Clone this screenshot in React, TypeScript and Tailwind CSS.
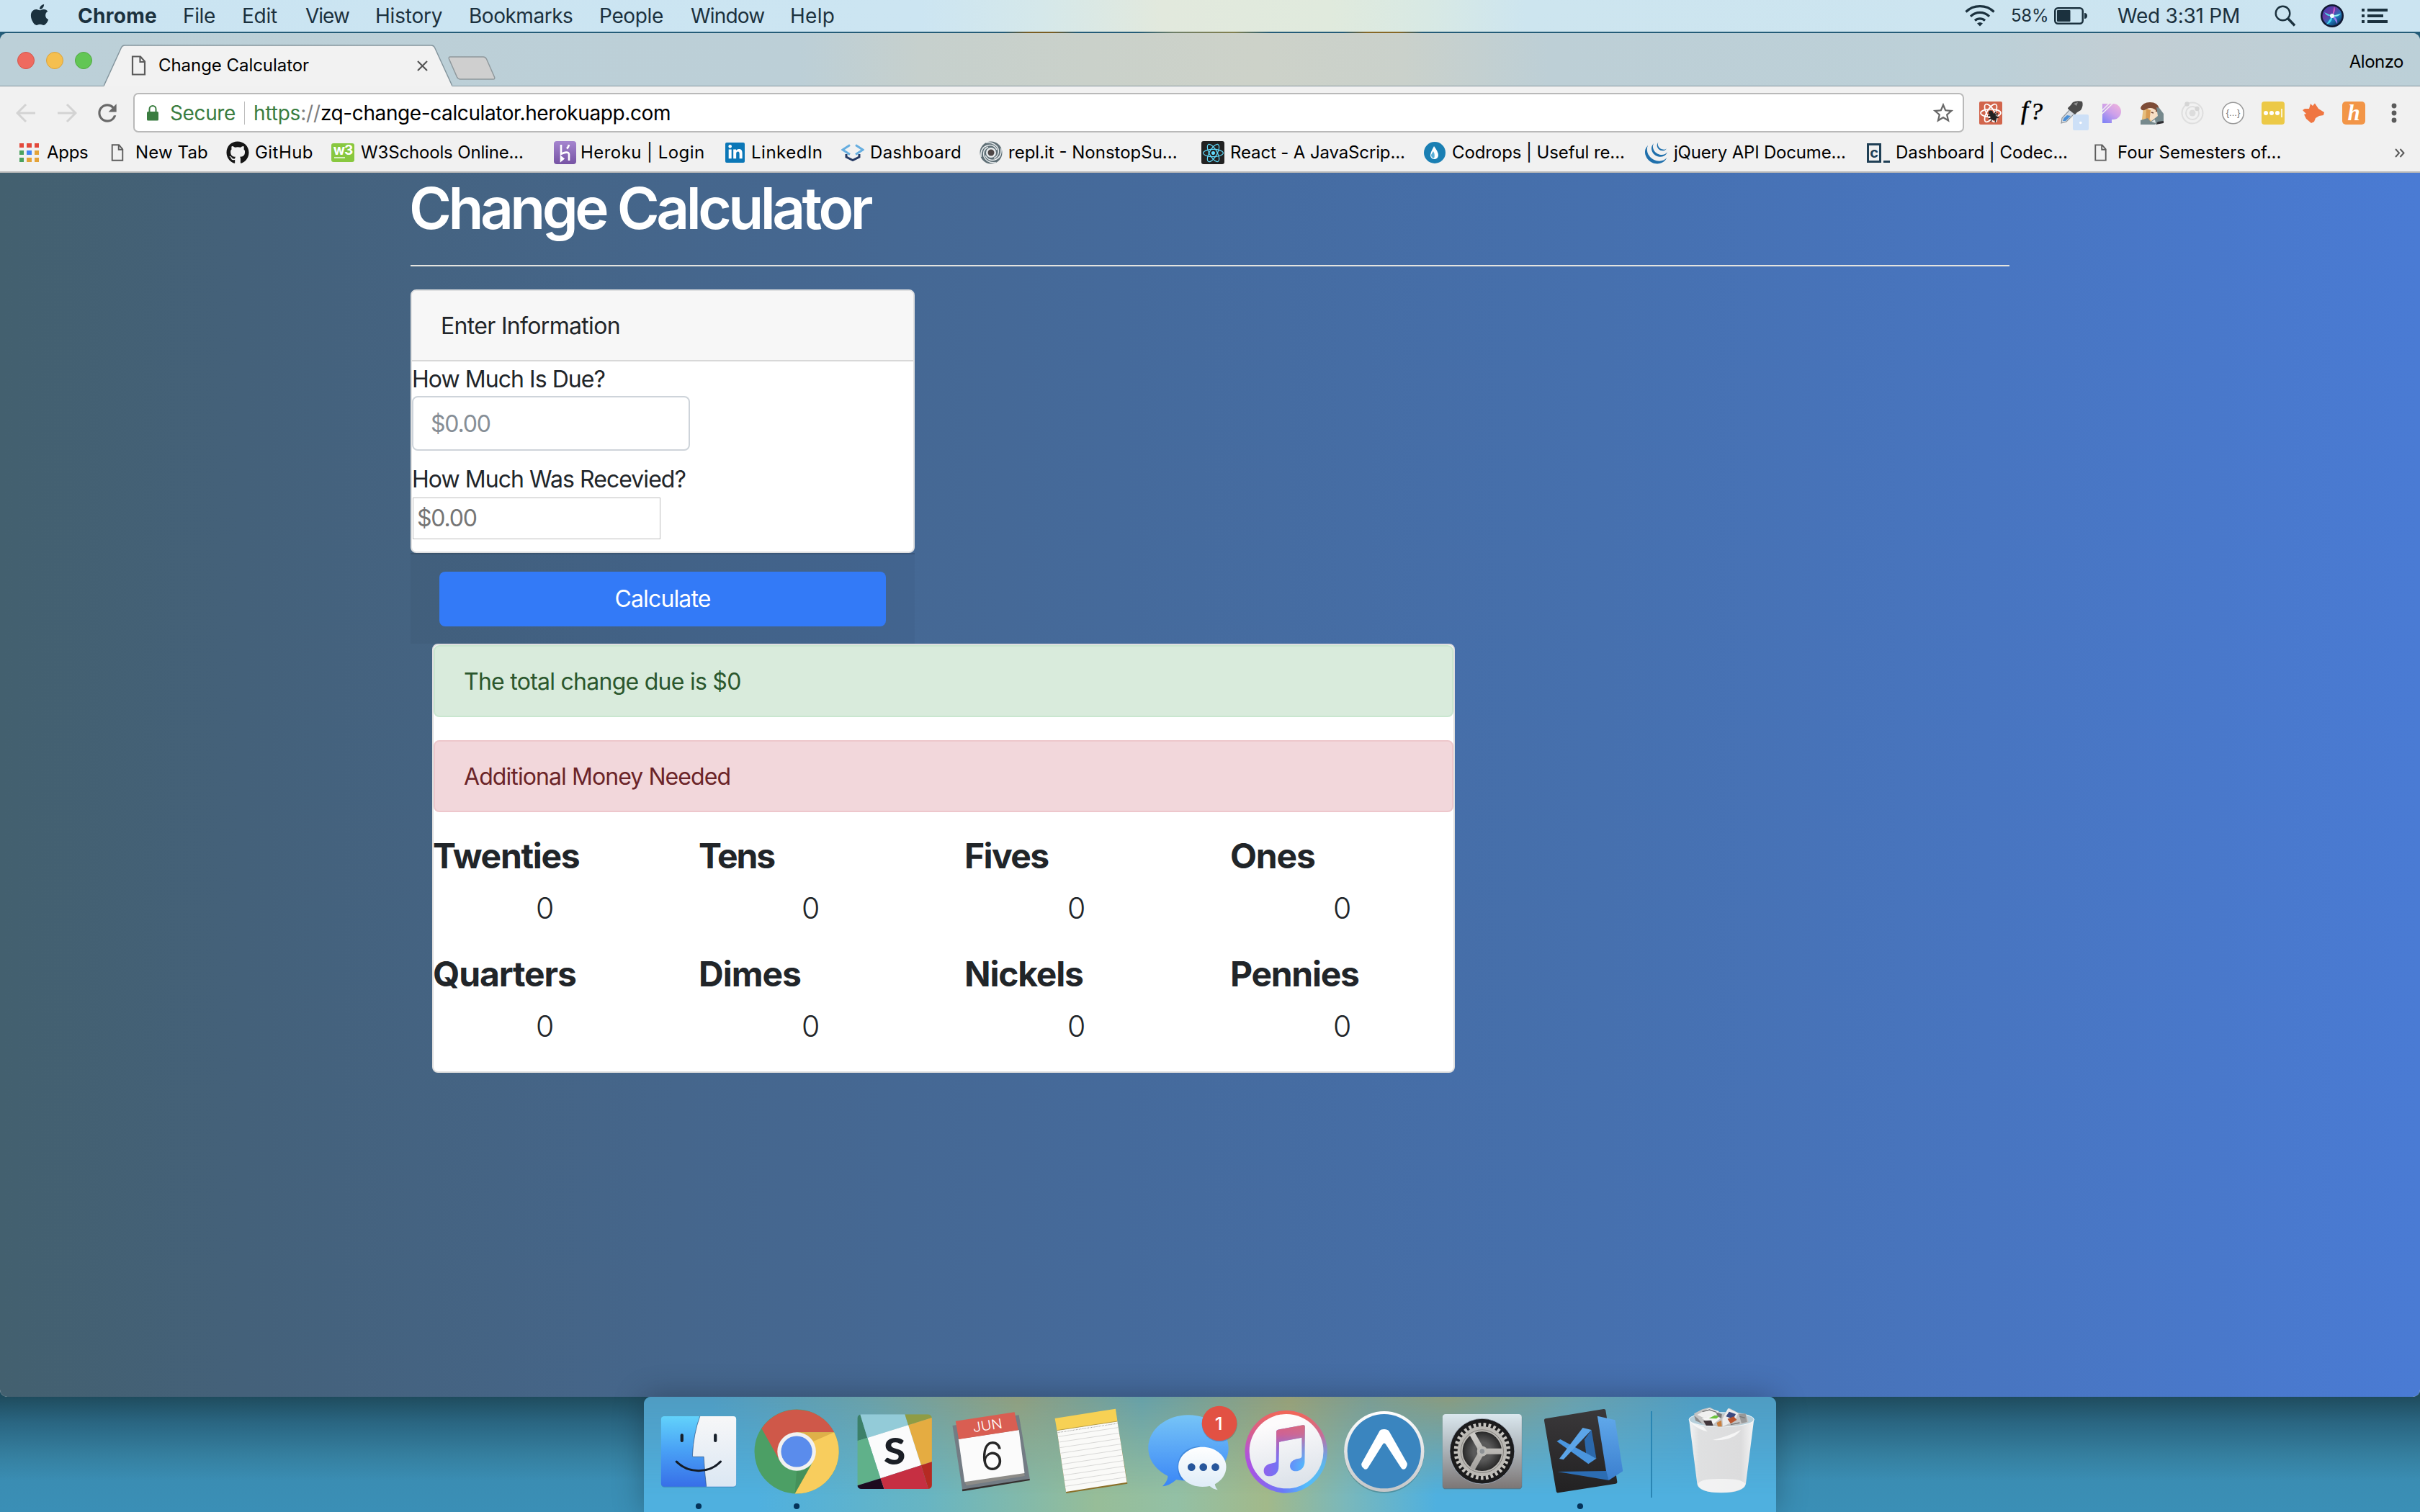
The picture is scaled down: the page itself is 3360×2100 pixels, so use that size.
import React from 'react';
import { FaApple, FaGithub, FaLinkedinIn, FaReact } from 'react-icons/fa';
import { SiJquery } from 'react-icons/si';
import { MdStarBorder, MdRefresh } from 'react-icons/md';

const menus = [
  { label: 'Chrome', cls: 'w-[146px] font-bold tracking-[0.28px]' },
  { label: 'File', cls: 'w-[82px] tracking-[-0.36px]' },
  { label: 'Edit', cls: 'w-[88px] tracking-[-0.25px]' },
  { label: 'View', cls: 'w-[97px] tracking-[-1px]' },
  { label: 'History', cls: 'w-[130px] tracking-[-0.2px]' },
  { label: 'Bookmarks', cls: 'w-[181px] tracking-[-0.48px]' },
  { label: 'People', cls: 'w-[127px] tracking-[-0.35px]' },
  { label: 'Window', cls: 'w-[138px] tracking-[-0.8px]' },
  { label: 'Help', cls: 'w-[80px] tracking-[0.3px]' },
];

function MenuBar() {
  return (
    <header className="flex h-[44px] shrink-0 items-center bg-[linear-gradient(90deg,#cae4f2_0%,#cce5f2_38%,#d5e8ea_43%,#e2e9dd_48%,#e0eadd_55%,#d8e9e4_59%,#cde5ef_63%,#cbe4f1_100%)] text-[28px] text-[#1b313e]">
      <FaApple className="ml-[41px] mt-[-4px] h-[33px] w-[28px]" />
      <nav className="ml-[39px] flex">
        {menus.map((m) => (
          <span key={m.label} className={`shrink-0 whitespace-nowrap ${m.cls}`}>{m.label}</span>
        ))}
      </nav>
      <div className="ml-auto mr-[45px] flex items-center">
        <svg className="h-[30px] w-[42px]" viewBox="0 0 42 30" fill="none" stroke="#1b313e" strokeWidth="3.2">
          <path d="M1.5 9.5C12-1 30-1 40.500 9.500" />
          <path d="M8 15.800C15.500 8.500 26.500 8.500 34 15.800" />
          <path d="M14 21.700C18 18 24 18 28 21.700" />
          <path d="M17 25.500Q21 22.500 25 25.500L21 29.500Z" fill="#1b313e" stroke="none" />
        </svg>
        <span className="ml-[22px] w-[60px] text-[24px] tracking-[-0.22px]">58%</span>
        <svg className="h-[26px] w-[48px]" viewBox="0 0 48 26">
          <rect x="1.250" y="2.250" width="38.500" height="21.500" rx="4" fill="none" stroke="#1b313e" strokeWidth="2.500" />
          <rect x="4" y="5" width="18.500" height="16" rx="1" fill="#1b313e" />
          <path d="M42 9C45 9 46 11 46 13S45 17 42 17Z" fill="#1b313e" />
        </svg>
        <span className="ml-[40px] w-[218px] whitespace-nowrap tracking-[-0.23px]">Wed 3:31 PM</span>
        <svg className="h-[30px] w-[30px]" viewBox="0 0 30 30" fill="none" stroke="#1b313e">
          <circle cx="11.500" cy="11.500" r="9.800" strokeWidth="2.400" />
          <path d="M18.500 18.500L28 28.500" strokeWidth="3.400" />
        </svg>
        <svg className="ml-[33px] h-[34px] w-[34px]" viewBox="0 0 34 34">
          <defs>
            <linearGradient id="siri" x1="0.100" y1="0" x2="0.900" y2="1">
              <stop offset="0" stopColor="#3a3fae" />
              <stop offset="0.350" stopColor="#6a3aa8" />
              <stop offset="0.650" stopColor="#1c78b8" />
              <stop offset="1" stopColor="#10204e" />
            </linearGradient>
          </defs>
          <circle cx="17" cy="17" r="16" fill="#101832" />
          <circle cx="17" cy="17" r="13.500" fill="url(#siri)" />
          <path d="M17 17L6 12C9 17 13 18 17 17Z" fill="#4fd6e8" />
          <path d="M17 17L20 4C22 9 20 14 17 17Z" fill="#d85fc8" />
          <path d="M17 17L29 14C26 18 21 19 17 17Z" fill="#8af0f0" />
          <path d="M17 17L9 29C15 27 18 22 17 17Z" fill="#47d8f0" />
          <path d="M17 17L24 28C25 23 22 18 17 17Z" fill="#9a7af0" />
          <circle cx="17" cy="17" r="3" fill="#f2ffff" />
        </svg>
        <svg className="ml-[24px] h-[22px] w-[36px]" viewBox="0 0 36 22" fill="#1b313e">
          <path d="M0 1h4v4H0zM8 1h28v4H8zM0 9h4v4H0zM8 9h22v4H8zM0 17h4v4H0zM8 17h28v4H8z" />
        </svg>
      </div>
    </header>
  );
}

function PageIcon({ className }: { className: string }) {
  return (
    <svg className={className} viewBox="0 0 20 28" fill="none" stroke="#5c5c5c" strokeWidth="2.200">
      <path d="M1.500 1.500H12.500L18.500 8.500V26.500H1.500Z" />
      <path d="M12 1.500V9H18.500" />
    </svg>
  );
}

function TabStrip() {
  return (
    <div className="flex h-[74px] shrink-0 border-b border-[#84959d] bg-[linear-gradient(90deg,#bcd0d8_0%,#bccfd7_33%,#c6d0cd_38%,#cad1ca_45%,#cdd2c9_52%,#cad1cb_58%,#bdcfd6_64%,#bcd0d8_82%,#c2ced4_88%,#bcd0d8_100%)]">
      <div className="ml-[24px] flex gap-[16px] pt-[26px]">
        <span className="h-[24px] w-[24px] rounded-full border border-[#d3564c] bg-[#ee6a5f]" />
        <span className="h-[24px] w-[24px] rounded-full border border-[#d9a23d] bg-[#f5bf4f]" />
        <span className="h-[24px] w-[24px] rounded-full border border-[#52a842] bg-[#62c655]" />
      </div>
      <div className="relative ml-[16px] mt-[16px] flex h-[58px] w-[484px] items-center">
        <svg className="absolute inset-0 h-[58px] w-[484px]" viewBox="0 0 484 58">
          <path d="M0 57.500L24.500 4Q26 1 29 1H455Q458 1 459.500 4L484 57.500V58H0Z" fill="#f2f2f2" />
          <path d="M0 57.500L24.500 4Q26 1 29 1H455Q458 1 459.500 4L484 57.500" fill="none" stroke="#84959d" strokeWidth="1.500" />
        </svg>
        <PageIcon className="relative ml-[38px] h-[28px] w-[21px]" />
        <span className="relative ml-[17px] whitespace-nowrap text-[24px] tracking-[-0.05px] text-black">Change Calculator</span>
        <svg className="relative ml-auto mr-[34px] h-[15px] w-[15px]" viewBox="0 0 15 15" stroke="#555" strokeWidth="2.200">
          <path d="M1 1L14 14M14 1L1 14" />
        </svg>
      </div>
      <svg className="ml-[-6px] mt-[32px] h-[33px] w-[68px]" viewBox="0 0 68 33">
        <path d="M3 1H49Q52 1 53.500 4L64.500 29Q65.500 32 63 32H17Q14 32 12.500 29L1.500 4Q0.500 1 3 1Z" fill="#cfcfcf" stroke="#8f989c" strokeWidth="1.500" />
      </svg>
      <span className="ml-auto mr-[23px] mt-[25px] text-[24px] leading-[30px] tracking-[-0.5px] text-black">Alonzo</span>
    </div>
  );
}

function Ext({ children }: { children: React.ReactNode }) {
  return (
    <svg className="h-[64px] w-[56px] shrink-0" viewBox="0 0 56 64">
      {children}
    </svg>
  );
}

function Extensions() {
  return (
    <div className="ml-[9px] flex">
      <Ext>
        <rect x="12" y="16" width="32" height="32" rx="2" fill="#d2654c" />
        <g fill="none" stroke="#fff" strokeWidth="1.700">
          <ellipse cx="28" cy="32" rx="14" ry="5.500" />
          <ellipse cx="28" cy="32" rx="14" ry="5.500" transform="rotate(60 28 32)" />
          <ellipse cx="28" cy="32" rx="14" ry="5.500" transform="rotate(-60 28 32)" />
        </g>
        <circle cx="28" cy="31.500" r="3" fill="#222" />
        <ellipse cx="31.500" cy="37" rx="4" ry="5.500" fill="#222" transform="rotate(-30 31.500 37)" />
        <path d="M24 36L38 33M25 40L39 38M28 44L35 30M34 45L37 35" stroke="#222" strokeWidth="1.300" />
      </Ext>
      <Ext>
        <text x="14" y="40" fontFamily="Liberation Serif" fontStyle="italic" fontSize="36" fill="#000" stroke="#000" strokeWidth="0.600">f</text>
        <text x="27" y="41" fontFamily="Liberation Serif" fontStyle="italic" fontSize="34" fill="#000" stroke="#000" strokeWidth="0.600">?</text>
      </Ext>
      <Ext>
        <path d="M14 46L15 39L27 26L33 32L21 44Z" fill="#d5dbe2" stroke="#8e959c" strokeWidth="1.200" />
        <path d="M16 43L17.500 39L22 35L27 36L20 43Z" fill="#4a8fd6" />
        <path d="M23 25L27 21L30 17Q36 14 43 16Q45 22 41 28L36 31L33 34L29 31L23 26Z" fill="#4c4c4c" />
        <path d="M31 19L37 17L35 22Z" fill="#929292" />
        <rect x="30" y="34" width="22" height="22" rx="2" fill="#cde0f7" />
        <circle cx="40.800" cy="45.500" r="1.800" fill="#fff" />
      </Ext>
      <Ext>
        <defs>
          <linearGradient id="pfill" x1="0.900" y1="0" x2="0.200" y2="1">
            <stop offset="0" stopColor="#f0b4dc" />
            <stop offset="0.500" stopColor="#cda0ea" />
            <stop offset="1" stopColor="#8585f5" />
          </linearGradient>
        </defs>
        <path d="M15 19H30A11 11 0 0 1 30 41H28V46H15Z" fill="url(#pfill)" />
        <path d="M14 29L25 18M14 33.500L30 18" stroke="#f1f1f1" strokeWidth="1.500" />
      </Ext>
      <Ext>
        <path d="M16 24L14 40L14 48H28L26 26Z" fill="#e6bd7c" />
        <path d="M22 25L20 38L30 44L36 36L35 25Z" fill="#f8dfc6" />
        <path d="M20 26L19 43L24 46L26 28Z" fill="#d79a52" />
        <path d="M12 25Q15 17 25 17Q36 17 38 26L35 30Q29 23 21 26Q14 31 12 25Z" fill="#7d4c37" />
        <path d="M12 48V42L22 39L26 44L36 36L34 24L38 25L44 33V44L34 46L32 48Z" fill="#76898d" />
        <path d="M27 44L32 41L33 46Z" fill="#dfe5e6" />
        <path d="M33 48L36 44L44 43V46Z" fill="#2f2f33" />
        <path d="M27 31l3 1M33 29l2 .500" stroke="#6b3c2c" strokeWidth="1.500" />
      </Ext>
      <Ext>
        <g fill="none" stroke="#dedede" strokeWidth="2">
          <circle cx="28" cy="32" r="14.500" />
          <circle cx="28" cy="32" r="9" />
        </g>
        <circle cx="28" cy="32" r="4.500" fill="#dcdcdc" />
        <circle cx="20.500" cy="19.500" r="3.200" fill="#d5d5d5" />
        <circle cx="34.500" cy="26" r="3.200" fill="#d5d5d5" />
      </Ext>
      <Ext>
        <circle cx="28.500" cy="32" r="14.800" fill="#fff" stroke="#999" strokeWidth="1.600" />
        <text x="28.500" y="36" textAnchor="middle" fontFamily="Liberation Sans" fontSize="13" fill="#777">{'{...}'}</text>
      </Ext>
      <Ext>
        <rect x="12" y="16" width="32" height="32" rx="4" fill="#ecc947" />
        <circle cx="18" cy="32" r="3" fill="#fff" />
        <circle cx="26" cy="32" r="3" fill="#fff" />
        <circle cx="34" cy="32" r="3" fill="#fff" />
        <path d="M40 26V38" stroke="#fff" strokeWidth="1.500" />
      </Ext>
      <Ext>
        <path d="M24 19L27 22L30 18.500L35 26L43 31L42 35L36 36L31 39L29 44L25 46L18 40L15 34L18 33L13 28L16 26H22Z" fill="#ef7642" />
      </Ext>
      <Ext>
        <rect x="12" y="16" width="32" height="32" rx="5" fill="#f29547" />
        <text x="28" y="42" textAnchor="middle" fontFamily="Liberation Serif" fontStyle="italic" fontWeight="700" fontSize="31" fill="#fff">h</text>
      </Ext>
      <Ext>
        <circle cx="28" cy="22" r="3.400" fill="#5b5b5b" />
        <circle cx="28" cy="32" r="3.400" fill="#5b5b5b" />
        <circle cx="28" cy="42" r="3.400" fill="#5b5b5b" />
      </Ext>
    </div>
  );
}

function Toolbar() {
  return (
    <div className="flex h-[73px] shrink-0 items-center">
      <svg className="ml-[22px] h-[28px] w-[28px]" viewBox="0 0 28 28" fill="none" stroke="#d3d3d3" strokeWidth="3">
        <path d="M27 14H3M14 2L2 14L14 26" />
      </svg>
      <svg className="ml-[29px] h-[28px] w-[28px]" viewBox="0 0 28 28" fill="none" stroke="#d3d3d3" strokeWidth="3">
        <path d="M1 14H25M14 2L26 14L14 26" />
      </svg>
      <MdRefresh className="ml-[23px] h-[38px] w-[38px] text-[#696969]" />
      <div className="ml-[17px] flex h-[55px] w-[2542px] items-center rounded-[7px] border-2 border-[#b9b9b9] bg-white pt-px text-[28px]">
        <svg className="ml-[17px] h-[22px] w-[16px]" viewBox="0 0 16 22">
          <rect x="0" y="9" width="16" height="12.500" rx="1.500" fill="#3a7d40" />
          <path d="M3.500 10V5.500a4.500 4.500 0 0 1 9 0V10" fill="none" stroke="#3a7d40" strokeWidth="2" />
        </svg>
        <span className="ml-[16px] w-[103px] tracking-[-0.38px] text-[#3a7d40]">Secure</span>
        <span className="h-[32px] w-px bg-[#bdbdbd]" />
        <span className="ml-[12px] tracking-[-0.18px] text-[#3a7d40]">https</span>
        <span className="tracking-[-0.18px] text-[#808080]">://</span>
        <span className="tracking-[-0.4px] text-black">zq-change-calculator.herokuapp.com</span>
        <MdStarBorder className="ml-auto mr-[10px] h-[34px] w-[34px] text-[#696969]" />
      </div>
      <Extensions />
    </div>
  );
}

function Bookmark({ cls, text, children, gap }: { cls: string; text: string; gap: string; children: React.ReactNode }) {
  return (
    <div className={`flex shrink-0 items-center whitespace-nowrap ${cls}`}>
      {children}
      <span className={gap}>{text}</span>
    </div>
  );
}

function Bookmarks() {
  return (
    <div className="flex h-[47px] shrink-0 items-start border-b-2 border-[#b9b9b9] pl-[27px] text-[24px] leading-[30px] text-black">
      <div className="flex items-center pt-[3px]">
        <Bookmark cls="w-[127px] tracking-[-0.3px]" text="Apps" gap="ml-[11px]">
          <div className="grid h-[26px] w-[27px] grid-cols-3 gap-[4px]">
            <i className="bg-[#e3493c]" /><i className="bg-[#e3493c]" /><i className="bg-[#e3493c]" />
            <i className="bg-[#4ba25e]" /><i className="bg-[#4285f4]" /><i className="bg-[#e4a338]" />
            <i className="bg-[#4ba25e]" /><i className="bg-[#e4a338]" /><i className="bg-[#e4a338]" />
          </div>
        </Bookmark>
        <Bookmark cls="w-[160px] tracking-[0.13px]" text="New Tab" gap="ml-[16px]">
          <PageIcon className="h-[24px] w-[18px]" />
        </Bookmark>
        <Bookmark cls="w-[146px] tracking-[0.45px]" text="GitHub" gap="ml-[8px]">
          <FaGithub className="h-[32px] w-[32px] text-[#161616]" />
        </Bookmark>
        <Bookmark cls="w-[309px] tracking-[-0.16px]" text="W3Schools Online..." gap="ml-[9px]">
          <span className="relative flex h-[26px] w-[32px] justify-center rounded-[3px] bg-[#88c83f] text-[19px] font-bold leading-[20px] tracking-[-1px] text-white">
            w3
            <i className="absolute bottom-[5px] left-[4px] h-[2px] w-[15px] bg-[#d9efc0]" />
          </span>
        </Bookmark>
        <Bookmark cls="w-[238px] tracking-[0.45px]" text="Heroku | Login" gap="ml-[6px]">
          <svg className="h-[32px] w-[31px]" viewBox="0 0 31 32">
            <defs>
              <linearGradient id="hk" x1="0" y1="0" x2="0" y2="1">
                <stop offset="0" stopColor="#a585cf" />
                <stop offset="1" stopColor="#7653a4" />
              </linearGradient>
            </defs>
            <rect width="31" height="32" rx="4" fill="url(#hk)" />
            <path d="M10 5V18C14 15.500 21 14 21 18.500V27M10 22V27L13 24.500ZM21 5Q20.500 8 18 10.500" fill="none" stroke="#fff" strokeWidth="2.600" />
          </svg>
        </Bookmark>
        <Bookmark cls="w-[161px] tracking-[0.5px]" text="LinkedIn" gap="ml-[9px]">
          <span className="flex h-[28px] w-[27px] items-center justify-center rounded-[2px] bg-[#0b77b7]">
            <FaLinkedinIn className="h-[22px] w-[22px] text-white" />
          </span>
        </Bookmark>
        <Bookmark cls="w-[192px] tracking-[0.36px]" text="Dashboard" gap="ml-[8px]">
          <svg className="h-[24px] w-[32px]" viewBox="0 0 32 24" fill="none" strokeWidth="3">
            <path d="M12 1.500L2 8L12 14.500M20 1.500L30 8L20 14.500" stroke="#66aee0" />
            <path d="M7 14V18L16 22.500L25 18V14" stroke="#263a63" />
          </svg>
        </Bookmark>
        <Bookmark cls="w-[308px]" text="repl.it - NonstopSu..." gap="ml-[8px]">
          <svg className="h-[32px] w-[32px]" viewBox="0 0 32 32">
            <circle cx="16" cy="16" r="15.500" fill="#5f6f76" />
            <g fill="none" stroke="#e8ecee" strokeWidth="1.500">
              <path d="M9 2Q22 1 26 11Q28 20 20 24" />
              <path d="M23 30Q10 31 6 21Q4 12 12 8" />
              <path d="M2 22Q1 9 11 6Q20 4 24 12" />
              <path d="M30 10Q31 23 21 26Q12 28 8 20" />
            </g>
            <circle cx="16" cy="16" r="7" fill="#e8ecee" />
            <circle cx="16" cy="16" r="4.500" fill="#4d4646" />
          </svg>
        </Bookmark>
        <Bookmark cls="w-[309px] tracking-[-0.13px]" text="React - A JavaScrip..." gap="ml-[8px]">
          <span className="flex h-[32px] w-[32px] items-center justify-center rounded-[3px] bg-[#222]">
            <FaReact className="h-[29px] w-[29px] text-[#61dafb]" />
          </span>
        </Bookmark>
        <Bookmark cls="w-[307px] tracking-[-0.1px]" text="Codrops | Useful re..." gap="ml-[9px]">
          <svg className="h-[30px] w-[30px]" viewBox="0 0 30 30">
            <circle cx="15" cy="15" r="15" fill="#1a7fb3" />
            <path d="M14 6Q20 14 20 18.500A5.500 5.500 0 0 1 9 18.500Q9 15 14 6Z" fill="#fff" />
            <path d="M13 13Q16 18 14 23A5 5 0 0 1 10 18Z" fill="#5ab0d8" />
          </svg>
        </Bookmark>
        <Bookmark cls="w-[308px] tracking-[-0.19px]" text="jQuery API Docume..." gap="ml-[9px]">
          <SiJquery className="h-[31px] w-[31px] text-[#2070ac]" />
        </Bookmark>
        <Bookmark cls="w-[316px] tracking-[-0.07px]" text="Dashboard | Codec..." gap="ml-[8px]">
          <span className="flex h-[28px] w-[32px] items-end gap-[3px]">
            <span className="flex h-[27px] w-[20px] items-center justify-center border-[3px] border-[#204056] pb-[2px] text-[20px] font-bold text-[#204056]">c</span>
            <i className="h-[3px] w-[9px] bg-[#204056]" />
          </span>
        </Bookmark>
        <Bookmark cls="w-[417px]" text="Four Semesters of..." gap="ml-[15px]">
          <PageIcon className="h-[24px] w-[17px]" />
        </Bookmark>
        <svg className="h-[13px] w-[14px]" viewBox="0 0 14 13" fill="none" stroke="#5a5a5a" strokeWidth="2">
          <path d="M1 1L6 6.500L1 12M7.500 1L12.500 6.500L7.500 12" />
        </svg>
      </div>
    </div>
  );
}

const coins = [
  [
    { name: 'Twenties', cls: 'tracking-[-1.3px]' },
    { name: 'Tens', cls: 'tracking-[-2.2px]' },
    { name: 'Fives', cls: 'tracking-[-1.6px]' },
    { name: 'Ones', cls: 'tracking-[-1.15px]' },
  ],
  [
    { name: 'Quarters', cls: 'tracking-[-1.11px]' },
    { name: 'Dimes', cls: 'tracking-[-1.02px]' },
    { name: 'Nickels', cls: 'tracking-[-1.2px]' },
    { name: 'Pennies', cls: 'tracking-[-1.28px]' },
  ],
];

function Page() {
  return (
    <main className="flex-1 bg-[linear-gradient(90deg,#43606f_0%,#44617a_10%,#45668c_28%,#456a9b_46%,#4670ae_66%,#4875c0_82%,#4a7bd4_100%)] pl-[570px] text-[32px] font-[440] text-[#212529]">
      <h1 className="ml-[-2px] pt-px text-[80px] font-[590] leading-[96px] tracking-[-4.5px] text-white">Change Calculator</h1>
      <hr className="mt-[31px] w-[2220px] border-t-2 border-[#e4e4e0]" />
      <section className="mt-[32px] w-[700px]">
        <div className="h-[366px] rounded-[8px] border-2 border-[#dfe0e1] bg-white">
          <div className="flex h-[98px] items-center rounded-t-[6px] border-b-2 border-[#d8d8d8] bg-[#f7f7f7] pl-[40px] pt-[2px] tracking-[-0.68px]">Enter Information</div>
          <label className="block h-[48px] pl-px leading-[50px] tracking-[-0.95px] -indent-[1px]">How Much Is Due?</label>
          <div className="flex h-[76px] w-[386px] items-center rounded-[8px] border-2 border-[#ced4da] pl-[24px] pt-px tracking-[-1.2px] text-[#868e96]">$0.00</div>
          <label className="mt-[16px] block h-[49px] pl-px leading-[48px] tracking-[-0.95px] -indent-[1px]">How Much Was Recevied?</label>
          <div className="ml-[1px] flex h-[58px] w-[344px] items-center border border-[#bdbdbd] pl-[5px] tracking-[-1.2px] text-[#757575]">$0.00</div>
        </div>
        <div className="h-[126px] border-t-2 border-black/[0.12] bg-black/[0.03] px-[40px] pt-[24px]">
          <div className="flex h-[76px] items-center justify-center rounded-[8px] bg-[#337af7] tracking-[-0.85px] text-white">Calculate</div>
        </div>
      </section>
      <section className="ml-[30px] h-[596px] w-[1420px] rounded-[8px] border-2 border-[#dfdfdf] bg-white">
        <div className="flex h-[100px] items-center rounded-[8px] border-2 border-[#c9e6cf] bg-[#d9ebdc] pl-[40px] pt-px tracking-[-0.74px] text-[#2b572d]">The total change due is $0</div>
        <div className="mt-[32px] flex h-[100px] items-center rounded-[8px] border-2 border-[#eec7cc] bg-[#f2d7db] pl-[40px] pt-px tracking-[-0.92px] text-[#6b2428]">Additional Money Needed</div>
        <div className="flex flex-col gap-[16px] pt-[32px]">
          {coins.map((row, i) => (
            <div key={i} className="flex h-[148px]">
              {row.map((c) => (
                <div key={c.name} className="w-[369px] shrink-0 last:w-auto">
                  <h2 className={`-ml-px text-[48px] font-bold leading-[58px] ${c.cls}`}>{c.name}</h2>
                  <p className="mt-[13px] pl-[142px] text-[41px] font-light leading-[60px]">0</p>
                </div>
              ))}
            </div>
          ))}
        </div>
      </section>
    </main>
  );
}

/* Dock artwork uses a 2.8 x 3 drawing grid per pixel. */
function DockIcon({ box, cls, children }: { box: string; cls: string; children: React.ReactNode }) {
  return (
    <svg className={`h-[160px] shrink-0 ${cls}`} viewBox={box} preserveAspectRatio="none">
      {children}
    </svg>
  );
}

function Dot({ x }: { x: number }) {
  return <ellipse cx={x} cy="516" rx="11.500" ry="12" fill="#04335a" />;
}

const noteLines = [226, 249, 272, 295, 318, 341, 364, 387, 410, 433];

function Dock() {
  return (
    <div className="relative ml-[894px] flex h-[160px] w-[1572px] overflow-hidden rounded-t-[10px] bg-[#4fb0df] shadow-[0_0_44px_rgba(0,0,0,0.28)]">
      <div className="absolute inset-0 bg-[linear-gradient(90deg,transparent_10%,rgba(150,190,140,0.35)_25%,#97bd98_40%,#93c0a5_47%,#a2b98a_55%,#7ab8bb_62%,rgba(79,176,223,0)_70%)]" />
      <div className="absolute inset-0 bg-[linear-gradient(90deg,#4f9cc2_6%,#6aa0a8_20%,#8f9e7f_33%,#66a0a8_44%,#969f78_57%,#7b9c92_64%,#8a9b7e_71%,#6ba0ab_82%,#4f9cc2_93%)] [mask-image:linear-gradient(#000_0%,transparent_85%)]" />
      <div className="relative flex">
        <DockIcon box="70 60 364 480" cls="ml-[11px] w-[130px]">
          <defs>
            <linearGradient id="fb" x1="0" y1="0" x2="0" y2="1">
              <stop offset="0" stopColor="#62d2fb" />
              <stop offset="0.500" stopColor="#489ff5" />
              <stop offset="1" stopColor="#376fe8" />
            </linearGradient>
            <linearGradient id="fw" x1="0" y1="0" x2="0" y2="1">
              <stop offset="0" stopColor="#f7f7f8" />
              <stop offset="1" stopColor="#dbe7f3" />
            </linearGradient>
          </defs>
          <rect x="107" y="143" width="291" height="294" rx="12" fill="#1d5f88" opacity="0.400" />
          <rect x="106" y="141" width="292" height="293" rx="12" fill="url(#fb)" />
          <path d="M257 141H386Q398 141 398 153V422Q398 434 386 434H282Q275 375 272 310H232Q227 310 228 303Q232 215 257 141Z" fill="url(#fw)" />
          <path d="M257 141Q232 215 228 303Q227 310 232 310H272Q275 375 282 434" fill="none" stroke="#17406f" strokeWidth="2.500" opacity="0.700" />
          <path d="M187 220V243M317 220V243" stroke="#17202a" strokeWidth="12" strokeLinecap="round" />
          <path d="M166 330Q200 368 252 368Q305 368 337 330" fill="none" stroke="#141b26" strokeWidth="9" strokeLinecap="round" />
          <Dot x={252} />
        </DockIcon>
        <DockIcon box="434 60 392 480" cls="w-[140px]">
          <g transform="translate(633 288) scale(1 1.070)">
            <circle r="164" fill="#4c9f65" />
            <path d="M-136 -90A164 164 0 0 1 146 -75H0L-65 37Z" fill="#cf5849" />
            <path d="M146 -75A164 164 0 0 1 -7 164L60 45L0 -75Z" fill="#f8cd5d" />
            <path d="M-7 164L57 52Q20 85 0 75Z" fill="#3d8450" opacity="0.500" />
            <path d="M146 -75H0L66 -40Z" fill="#cf9c3c" opacity="0.600" />
            <circle r="75" fill="#f1f1f1" />
            <circle r="60.500" fill="#5a8cec" />
          </g>
          <Dot x={633} />
        </DockIcon>
        <DockIcon box="826 60 364 480" cls="w-[130px]">
          <clipPath id="sl"><rect x="869" y="133" width="290" height="311" rx="16" /></clipPath>
          <g clipPath="url(#sl)">
            <path d="M869 133H880L908 231L869 244Z" fill="#3c8068" />
            <path d="M880 133H1054L1067 178L908 231Z" fill="#93cbd8" />
            <path d="M1054 133H1159V147L1067 178Z" fill="#8f9c44" />
            <path d="M1067 178L1159 147V331L1117 345Z" fill="#e5ac41" />
            <path d="M908 231L1067 178L1117 345L959 400Z" fill="#fbfbfc" />
            <path d="M869 244L908 231L959 400L869 430Z" fill="#60b18a" />
            <path d="M869 430L959 400L973 444H869Z" fill="#1d0a1f" />
            <path d="M959 400L1117 345L1145 444H973Z" fill="#c62f42" />
            <path d="M1117 345L1159 331V444H1145Z" fill="#b52a22" />
          </g>
          <text x="1014" y="343" textAnchor="middle" fontFamily="Lato" fontWeight="900" fontSize="154" fill="#1a1e25">S</text>
        </DockIcon>
        <DockIcon box="1190 60 378 480" cls="w-[135px]">
          <path d="M1239 180L1497 136L1540 406L1278 453Z" fill="#737c84" />
          <path d="M1276 446L1538 402L1540 408L1278 454Z" fill="#34302e" />
          <path d="M1286 415L1517 375L1520 390L1293 430Z" fill="#8d8c88" />
          <path d="M1262 236L1497 198L1519 378L1286 415Z" fill="#fbfbfb" />
          <path d="M1251 161L1480 124L1495 199L1263 237Z" fill="#d95e52" />
          <text x="1375" y="199" textAnchor="middle" transform="rotate(-9 1375 180)" fontFamily="Inter" fontSize="56" fontWeight="300" fill="#fff">JUN</text>
          <text transform="translate(1393 367) scale(0.900 1)" textAnchor="middle" fontFamily="Inter" fontSize="166" fontWeight="300" fill="#262626">6</text>
        </DockIcon>
        <DockIcon box="56 60 392 480" cls="w-[140px]">
          <path d="M133 202L368 164L407 422L169 462Z" fill="#8a6f28" />
          <path d="M133 200L368 162L405 416L168 456Z" fill="#fafaf8" />
          <path d="M125 150L361 110L368 162L133 200Z" fill="#f7d154" />
          <path d="M133 200L368 162" stroke="#a9892f" strokeWidth="2" />
          <path d="M136 209L368 171" stroke="#999" strokeWidth="3" strokeDasharray="3 3" />
          {noteLines.map((y, i) => (
            <path key={y} d={`M${138 + i * 3} ${y}L${371 + i * 3.4} ${y - 38}`} stroke="#c9c9c7" strokeWidth="2" />
          ))}
        </DockIcon>
        <DockIcon box="448 60 406 480" cls="w-[145px]">
          <defs>
            <linearGradient id="mb" x1="0" y1="0" x2="0" y2="1">
              <stop offset="0" stopColor="#76c4f7" />
              <stop offset="1" stopColor="#3a86f6" />
            </linearGradient>
            <linearGradient id="mw" x1="0" y1="0" x2="0" y2="1">
              <stop offset="0" stopColor="#ffffff" />
              <stop offset="1" stopColor="#dcebf7" />
            </linearGradient>
          </defs>
          <path d="M644 136C730 136 800 197 800 273C800 349 730 410 644 410C628 410 612 408 597 405C580 422 560 432 543 433C555 420 564 405 564 390C517 365 488 322 488 273C488 197 558 136 644 136Z" fill="url(#mb)" />
          <path d="M602 352C602 300 640 266 690 266L620 408C606 392 602 372 602 352Z" fill="#1d5fae" opacity="0.350" />
          <path d="M698 269C750 269 791 306 791 352C791 383 774 409 747 424C748 434 752 442 758 448C746 446 735 440 727 432C718 434 708 435 698 435C646 435 605 398 605 352C605 306 646 269 698 269Z" fill="url(#mw)" />
          <ellipse cx="656" cy="353" rx="15" ry="16" fill="#27569b" />
          <ellipse cx="702" cy="353" rx="15" ry="16" fill="#27569b" />
          <ellipse cx="749" cy="353" rx="15" ry="16" fill="#27569b" />
          <ellipse cx="765" cy="174" rx="69" ry="73" fill="#334" opacity="0.250" />
          <ellipse cx="764.500" cy="170.500" rx="68" ry="72.500" fill="#e25143" />
          <text x="762" y="198" textAnchor="middle" fontFamily="Inter" fontSize="74" fontWeight="500" fill="#fff">1</text>
        </DockIcon>
        <DockIcon box="854 60 364 480" cls="w-[130px]">
          <defs>
            <linearGradient id="ith" gradientUnits="userSpaceOnUse" x1="870" y1="0" x2="1180" y2="0">
              <stop offset="0" stopColor="#b04fe0" />
              <stop offset="0.450" stopColor="#6a78f8" />
              <stop offset="0.750" stopColor="#52bdfb" />
              <stop offset="1" stopColor="#5fb6e8" />
            </linearGradient>
            <linearGradient id="itv" gradientUnits="userSpaceOnUse" x1="0" y1="118" x2="0" y2="340">
              <stop offset="0.050" stopColor="#f0665a" />
              <stop offset="0.450" stopColor="#dd5f86" stopOpacity="0.850" />
              <stop offset="1" stopColor="#b060d0" stopOpacity="0" />
            </linearGradient>
            <linearGradient id="itw" x1="0" y1="0" x2="0.200" y2="1">
              <stop offset="0.200" stopColor="#fdfbfc" />
              <stop offset="1" stopColor="#dde3ea" />
            </linearGradient>
            <path id="note" d="M986 205Q986 199 992 197L1089 178Q1097 176 1097 184L1096 330C1096 355 1080 370 1061 370C1046 370 1039 360 1039 348C1039 330 1055 319 1075 317Q1085 316 1085 307V230L997 248L995 350C995 375 980 391 958 391C944 391 937 381 937 368C937 352 950 340 970 337Q985 335 985 328Z" />
          </defs>
          <ellipse cx="1024" cy="289" rx="160" ry="172" fill="url(#ith)" />
          <ellipse cx="1024" cy="289" rx="160" ry="172" fill="url(#itv)" />
          <ellipse cx="1025" cy="287" rx="144" ry="155" fill="url(#itw)" />
          <use href="#note" fill="url(#ith)" />
          <use href="#note" fill="url(#itv)" />
        </DockIcon>
        <DockIcon box="1218 60 350 480" cls="w-[125px]">
          <defs>
            <linearGradient id="as" x1="0" y1="0" x2="0" y2="1">
              <stop offset="0" stopColor="#ffffff" />
              <stop offset="1" stopColor="#c4c6c8" />
            </linearGradient>
          </defs>
          <ellipse cx="1405" cy="292" rx="156" ry="169" fill="#244" opacity="0.300" />
          <ellipse cx="1405" cy="288" rx="156" ry="168" fill="url(#as)" />
          <ellipse cx="1405" cy="287" rx="143" ry="155" fill="#3a85bf" />
          <path d="M1388 201Q1392 195 1405 195Q1418 195 1424 203L1494 336Q1497 345 1489 358Q1480 367 1472 358L1411 257Q1405 250 1400 257L1341 358Q1332 367 1325 358Q1313 348 1318 336Z" fill="#fff" />
        </DockIcon>
        <DockIcon box="56 60 420 480" cls="w-[150px]">
          <defs>
            <linearGradient id="spb" x1="0" y1="0" x2="0" y2="1">
              <stop offset="0" stopColor="#dae7ee" />
              <stop offset="0.500" stopColor="#aab1b6" />
              <stop offset="1" stopColor="#7c7675" />
            </linearGradient>
            <linearGradient id="spg" gradientUnits="userSpaceOnUse" x1="0" y1="-80" x2="0" y2="80">
              <stop offset="0" stopColor="#d2d0cc" />
              <stop offset="1" stopColor="#a09e9a" />
            </linearGradient>
            <radialGradient id="spd">
              <stop offset="0.400" stopColor="#5a5a5a" />
              <stop offset="1" stopColor="#1b1b1b" />
            </radialGradient>
          </defs>
          <rect x="120" y="134" width="309" height="311" rx="12" fill="#444" opacity="0.500" />
          <rect x="120" y="132" width="308" height="310" rx="12" fill="url(#spb)" />
          <g transform="translate(274 287) scale(1 1.080)">
            <circle r="126" fill="#1b1b1c" stroke="#bcc9da" strokeWidth="2" />
            <circle r="88" fill="url(#spd)" />
            <circle r="102" fill="none" stroke="#c6c4bf" strokeWidth="16" pathLength="66" strokeDasharray="1.050 0.950" />
            <circle r="86" fill="none" stroke="#bab8b3" strokeWidth="20" />
            <circle r="83" fill="none" stroke="#6d6b68" strokeWidth="2" />
            <g stroke="url(#spg)" strokeWidth="22">
              <path d="M0 0L78 0.100" />
              <path d="M0 0L-39 -68" />
              <path d="M0 0L-39 68" />
            </g>
            <circle r="20" fill="#bab8b3" />
            <circle r="11" fill="#8e9295" stroke="#d9d9d9" strokeWidth="1.500" />
          </g>
        </DockIcon>
        <DockIcon box="476 60 406 480" cls="w-[145px]">
          <defs>
            <linearGradient id="vsk" x1="0" y1="0" x2="0" y2="1">
              <stop offset="0" stopColor="#3a383a" />
              <stop offset="1" stopColor="#222122" />
            </linearGradient>
            <linearGradient id="vsb" x1="0" y1="0" x2="0" y2="1">
              <stop offset="0" stopColor="#60a8ea" />
              <stop offset="1" stopColor="#3b7fcf" />
            </linearGradient>
          </defs>
          <path d="M520 151L746 111Q753 110 754 116L799 414Q800 421 793 422L570 460Q563 461 562 454L515 158Q515 152 520 151Z" fill="url(#vsk)" />
          <path d="M567 372L757 369L767 408Z" fill="#2c6db3" />
          <path d="M722 140L791 157L821 370L766 408L756 369Z" fill="url(#vsb)" />
          <path d="M672 238L699 198L718 317L678 297Z" fill="#2b68ab" />
          <path d="M564 245L578 237L718 317L687 340Z" fill="#4a95de" />
          <path d="M665 189L699 198L590 322L574 318Z" fill="#5ca5e8" />
          <Dot x={655} />
        </DockIcon>
        <span className="ml-[17px] mt-[20px] h-[120px] w-[2px] bg-[#2a86b4]" />
        <DockIcon box="1036 60 336 480" cls="ml-[36px] w-[120px]">
          <defs>
            <linearGradient id="tr" x1="0" y1="0" x2="1" y2="0">
              <stop offset="0" stopColor="#f3f4f5" />
              <stop offset="0.150" stopColor="#dfe0e1" />
              <stop offset="0.800" stopColor="#dcdcdd" />
              <stop offset="1" stopColor="#f5f5f5" />
            </linearGradient>
          </defs>
          <path d="M1078 152L1110 424Q1116 459 1204 460Q1292 459 1299 424L1331 152Q1310 184 1204 184T1078 152Z" fill="url(#tr)" />
          <path d="M1112 424Q1120 400 1204 402Q1288 400 1297 424Q1290 458 1204 459T1112 424Z" fill="#fff" opacity="0.600" />
          <ellipse cx="1204.500" cy="155" rx="126" ry="30" fill="#b6cfdb" stroke="#f2f6f8" strokeWidth="3" />
          <path d="M1098 130L1130 112L1160 104L1190 122L1212 135L1235 107L1268 126L1300 132L1310 165L1270 178L1200 186L1140 178L1105 160Z" fill="#c4c4c4" />
          <path d="M1110 135L1155 108L1195 120L1180 140L1135 148Z" fill="#f0f0f0" />
          <path d="M1098 138L1112 150L1130 172L1104 160Z" fill="#8b8b8b" />
          <path d="M1128 150L1180 136L1200 150L1170 176Z" fill="#f4f4f4" />
          <path d="M1134 160L1165 158L1172 180L1145 180Z" fill="#41353a" />
          <path d="M1155 150L1178 137L1196 140L1185 151Z" fill="#6cc23e" />
          <path d="M1182 124L1206 132L1204 150L1190 140Z" fill="#777" />
          <path d="M1208 152L1230 108L1270 128L1256 160L1210 184Z" fill="#ececec" />
          <path d="M1222 142L1234 122L1260 132L1250 152Z" fill="#3a4a80" />
          <path d="M1228 152L1252 142L1264 156L1240 172Z" fill="#b9552f" />
          <path d="M1186 168L1204 158L1206 184L1190 184Z" fill="#c87f3e" />
          <path d="M1272 132L1298 130L1304 165L1282 170Z" fill="#999" />
          <path d="M1130 122L1158 114L1185 124M1275 142L1296 148M1240 176L1275 168" fill="none" stroke="#777" strokeWidth="4" />
          <path d="M1085 168Q1120 200 1150 205L1135 186Z" fill="#fff" opacity="0.700" />
          <path d="M1170 240Q1250 245 1280 198Q1230 225 1170 240Z" fill="#fff" opacity="0.700" />
        </DockIcon>
      </div>
    </div>
  );
}

export default function App() {
  return (
    <div className="flex h-[2100px] w-[3360px] flex-col overflow-hidden bg-[#245c78] font-['Inter',sans-serif]">
      <MenuBar />
      <div className="h-[2px] shrink-0 bg-[linear-gradient(90deg,#245c78_41.500%,#7a5d22_42.500%,#7a5d22_43.500%,#245c78_44.500%,#245c78_47%,#6f7f68_48.500%,#82804f_51%,#245c78_52.500%,#245c78_55.500%,#876826_56.500%,#876826_57.800%,#245c78_58.800%)]" />
      <div className="h-[2054px] bg-[linear-gradient(#245c78_0px,#245c78_1800px,#1f4c5e_1894px,#2a6682_1930px,#357f9f_1975px,#3a8db3_2010px,#3a8fb6_2054px)]">
        <div className="flex h-[1894px] flex-col overflow-hidden rounded-[10px] bg-[#f1f1f1]">
          <TabStrip />
          <Toolbar />
          <Bookmarks />
          <Page />
        </div>
        <Dock />
      </div>
    </div>
  );
}
